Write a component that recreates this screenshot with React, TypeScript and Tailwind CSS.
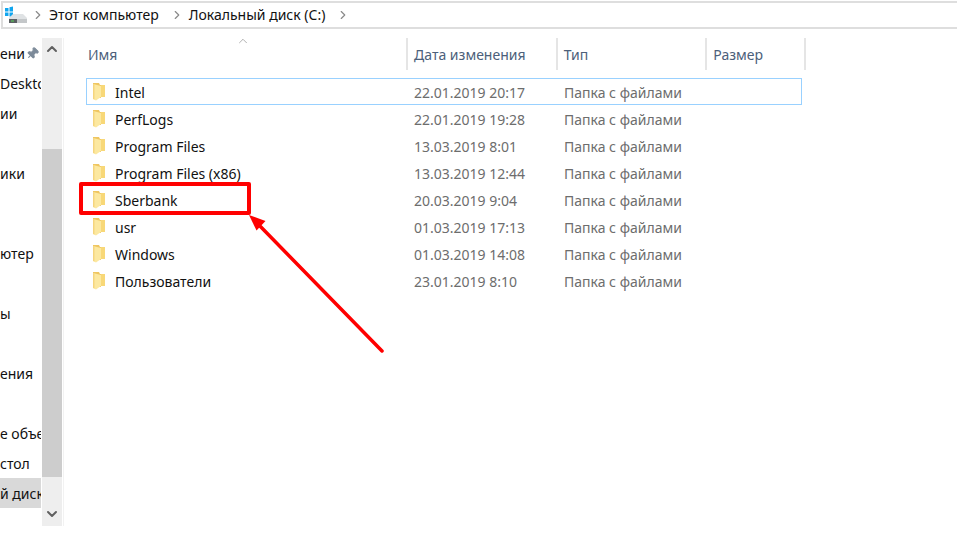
import { ChevronRight, ChevronUp, ChevronDown, Pin } from "lucide-react";

const files = [
  { name: "Intel", date: "22.01.2019 20:17", selected: true },
  { name: "PerfLogs", date: "22.01.2019 19:28" },
  { name: "Program Files", date: "13.03.2019 8:01" },
  { name: "Program Files (x86)", date: "13.03.2019 12:44" },
  { name: "Sberbank", date: "20.03.2019 9:04" },
  { name: "usr", date: "01.03.2019 17:13" },
  { name: "Windows", date: "01.03.2019 14:08" },
  { name: "Пользователи", date: "23.01.2019 8:10" },
];

function FolderIcon() {
  return (
    <svg width="13" height="18" viewBox="0 0 13 18" className="shrink-0">
      <path d="M0 0h6l1 2h5v12H8v1H0z" fill="#efc661" />
      <path d="M8 2h4v12H8z" fill="#f8d878" />
      <path d="M0 1l8 2v11l-5 3.500L0 16z" fill="#fce8a0" />
      <path d="M0 1v15l1.500 .6V1.500z" fill="#f5d57e" />
    </svg>
  );
}

function DriveIcon() {
  return (
    <svg width="24" height="18" viewBox="0 0 24 18" className="shrink-0">
      <path d="M1 2h3.500v3.500H1zM5.500 1.300L9 .6v4.900H5.500zM1 6.500h3.500V10H1zM5.500 6.500H9v4.500l-3.500-.6z" fill="#10a5ee" />
      <path d="M5 12l4-4h10l4 4v1H5z" fill="#dfe2e4" />
      <path d="M5 13h18v4H5z" fill="#c4c7c9" />
      <path d="M5 13h8v4H5z" fill="#5c6063" />
      <path d="M7 14.500h3v1H7z" fill="#57d657" />
    </svg>
  );
}

function Sep() {
  return <ChevronRight size={14} strokeWidth={2} className="text-[#8a8a8a]" />;
}

function Arrow() {
  return (
    <svg width="140" height="140" viewBox="0 0 140 140" className="absolute left-[248px] top-[214px]">
      <path d="M134 137L10 10" stroke="#ff0000" strokeWidth="3.500" strokeLinecap="round" fill="none" />
      <path d="M1 1L17.500 7L8.500 16.500z" fill="#ff0000" />
    </svg>
  );
}

function NavRow({ text, space, active, pin }: { text: string; space?: string; active?: boolean; pin?: boolean }) {
  return (
    <div className={`flex h-[30px] w-[41px] items-center overflow-hidden whitespace-nowrap ${space || ""} ${active ? "bg-[#d9d9d9]" : ""}`}>
      <span>{text}</span>
      {pin && <Pin size={13} className="ml-[1px] shrink-0 rotate-45 fill-[#7c8a99] text-[#7c8a99]" />}
    </div>
  );
}

export default function App() {
  return (
    <div className="relative h-[546px] w-[957px] overflow-hidden bg-white font-['Noto_Sans',sans-serif] text-[14px] text-[#111111]">
      {/* address bar */}
      <div className="ml-px mt-px flex h-[28px] items-center border-y-2 border-l-2 border-[#dedede] pl-[1px]">
        <DriveIcon />
        <div className="ml-[3px]"><Sep /></div>
        <span className="ml-[4px] pb-[2px]">Этот компьютер</span>
        <div className="ml-[11px]"><Sep /></div>
        <span className="ml-[5px] pb-[2px]">Локальный диск (C:)</span>
        <div className="ml-[11px]"><Sep /></div>
      </div>

      <div className="mt-[9px] flex">
        {/* nav pane */}
        <div className="flex w-[42px] flex-col">
          <NavRow text="ени" pin />
          <NavRow text="Desktop" />
          <NavRow text="ии" />
          <NavRow text="ики" space="mt-[30px]" />
          <NavRow text="ютер" space="mt-[50px]" />
          <NavRow text="ы" space="mt-[30px]" />
          <NavRow text="ения" space="mt-[30px]" />
          <NavRow text="е объекты" space="mt-[30px]" />
          <NavRow text="стол" />
          <NavRow text="й диск" active />
        </div>

        {/* scrollbar */}
        <div className="flex h-[488px] w-[20px] flex-col items-center bg-[#eeeeee]">
          <ChevronUp size={16} strokeWidth={3} className="mt-[3px] text-[#606060]" />
          <div className="mt-[92px] h-[328px] w-full bg-[#cdcdcd]" />
          <ChevronDown size={16} strokeWidth={3} className="mt-[29px] text-[#606060]" />
        </div>

        {/* file list */}
        <div className="ml-px w-[743px] border-l border-[#f2f2f2] pl-[22px]">
          <div className="relative flex h-[32px] items-center text-[#4c607a]">
            <ChevronUp size={14} strokeWidth={1} className="absolute left-[150px] top-[-4px] text-[#7a7a7a]" />
            <span className="w-[321px] pl-[2px]">Имя</span>
            <div className="flex h-full w-[150px] items-center border-l-2 border-[#e5e5e5] pl-[6px]">Дата изменения</div>
            <div className="flex h-full w-[150px] items-center border-l-2 border-[#e5e5e5] pl-[6px]">Тип</div>
            <div className="flex h-full w-[101px] items-center border-x-2 border-[#e5e5e5] pl-[6px]">Размер</div>
          </div>
          <div className="mt-[8px] w-[716px]">
            {files.map((f) => (
              <div
                key={f.name}
                className={`relative flex h-[27px] items-center ${f.selected ? "border border-[#99d1ff]" : "border border-transparent"}`}
              >
                <div className="ml-[6px] flex w-[321px] items-center">
                  <FolderIcon />
                  <span className="ml-[9px] pt-[2px]">{f.name}</span>
                  {f.name === "Sberbank" && (
                    <div className="absolute left-[-8px] top-[-5px] h-[33px] w-[172px] rounded-[2px] border-[4px] border-[#ff0000]" />
                  )}
                </div>
                <span className="w-[150px] pt-[2px] text-[#6d6d6d]">{f.date}</span>
                <span className="pt-[2px] text-[#6d6d6d]">Папка с файлами</span>
              </div>
            ))}
          </div>
        </div>
      </div>
      <Arrow />
    </div>
  );
}
